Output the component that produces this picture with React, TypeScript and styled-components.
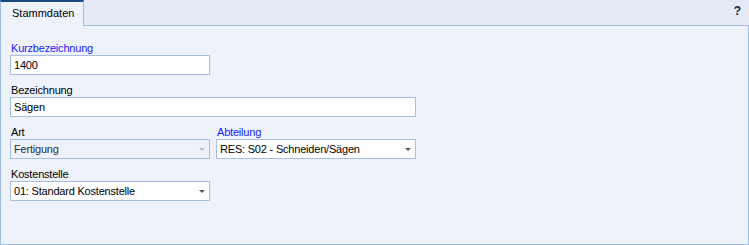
import React from "react";
import styled, { createGlobalStyle } from "styled-components";

const GlobalStyle = createGlobalStyle`
	html, body {
		margin: 0;
		padding: 0;
		background: #ffffff;
	}
	body {
		font-family: "Liberation Sans", Arial, sans-serif;
		font-size: 11px;
		letter-spacing: -0.2px;
		color: #000000;
	}
`;

const Frame = styled.div`
	width: 749px;
	height: 245px;
	display: flex;
	flex-direction: column;
	box-sizing: border-box;
`;

const TabStrip = styled.div`
	height: 26px;
	display: flex;
	background: #e4ebf6;
`;

const Tab = styled.div`
	width: 84px;
	box-sizing: border-box;
	border-top: 2px solid #1d4b80;
	border-left: 1px solid #a2bde3;
	border-right: 1px solid #a2bde3;
	background: #eef3fb;
	padding: 4px 0 0 11px;
	line-height: 14px;
	letter-spacing: 0;
`;

const StripFiller = styled.div`
	flex: 1;
	display: flex;
	justify-content: flex-end;
	border-bottom: 1px solid #a2bde3;
	padding: 4px 8px 0 0;
`;

const HelpButton = styled.span`
	font-weight: bold;
	font-size: 12px;
	line-height: 14px;
	color: #13253d;
	cursor: pointer;
`;

const Panel = styled.div`
	flex: 1;
	box-sizing: border-box;
	background: #eef3fb;
	border: 1px solid #a2bde3;
	border-top: none;
	padding: 7px 0 0 9px;
	display: grid;
	grid-template-columns: 200px 200px;
	grid-auto-rows: 42px;
	column-gap: 6px;
	align-content: start;
`;

const Field = styled.div<{ $wide?: boolean; $col?: number }>`
	display: flex;
	flex-direction: column;
	grid-column: ${(p) => (p.$wide ? "1 / span 2" : p.$col ? `${p.$col}` : "auto")};
`;

const Label = styled.div<{ $required?: boolean }>`
	height: 22px;
	box-sizing: border-box;
	padding: 8px 0 0 1px;
	line-height: 14px;
	color: ${(p) => (p.$required ? "#2020ff" : "#000000")};
`;

const TextInput = styled.div`
	height: 20px;
	box-sizing: border-box;
	border: 1px solid #a7bfe2;
	background: #ffffff;
	padding: 0 3px;
	line-height: 18px;
	white-space: nowrap;
	overflow: hidden;
`;

const Combo = styled(TextInput)<{ $disabled?: boolean }>`
	display: flex;
	justify-content: space-between;
	align-items: center;
	padding-right: 4px;
	background: ${(p) => (p.$disabled ? "#eef3fb" : "#ffffff")};
	color: ${(p) => (p.$disabled ? "#2e2e2e" : "#000000")};
`;

const Arrow = styled.span<{ $disabled?: boolean }>`
	width: 0;
	height: 0;
	border-left: 3px solid transparent;
	border-right: 3px solid transparent;
	border-top: 3px solid ${(p) => (p.$disabled ? "#b9bfc8" : "#555a62")};
	margin-top: 1px;
`;

const ComboBox = ({ value, disabled }: { value: string; disabled?: boolean }) => (
	<Combo $disabled={disabled}>
		<span>{value}</span>
		<Arrow $disabled={disabled} />
	</Combo>
);

export default function App() {
	return (
		<>
			<GlobalStyle />
			<Frame>
				<TabStrip>
					<Tab>Stammdaten</Tab>
					<StripFiller>
						<HelpButton>?</HelpButton>
					</StripFiller>
				</TabStrip>
				<Panel>
					<Field $col={1}>
						<Label $required>Kurzbezeichnung</Label>
						<TextInput>1400</TextInput>
					</Field>
					<Field $wide>
						<Label>Bezeichnung</Label>
						<TextInput>Sägen</TextInput>
					</Field>
					<Field>
						<Label>Art</Label>
						<ComboBox value="Fertigung" disabled />
					</Field>
					<Field>
						<Label $required>Abteilung</Label>
						<ComboBox value="RES: S02 - Schneiden/Sägen" />
					</Field>
					<Field $col={1}>
						<Label>Kostenstelle</Label>
						<ComboBox value="01: Standard Kostenstelle" />
					</Field>
				</Panel>
			</Frame>
		</>
	);
}
